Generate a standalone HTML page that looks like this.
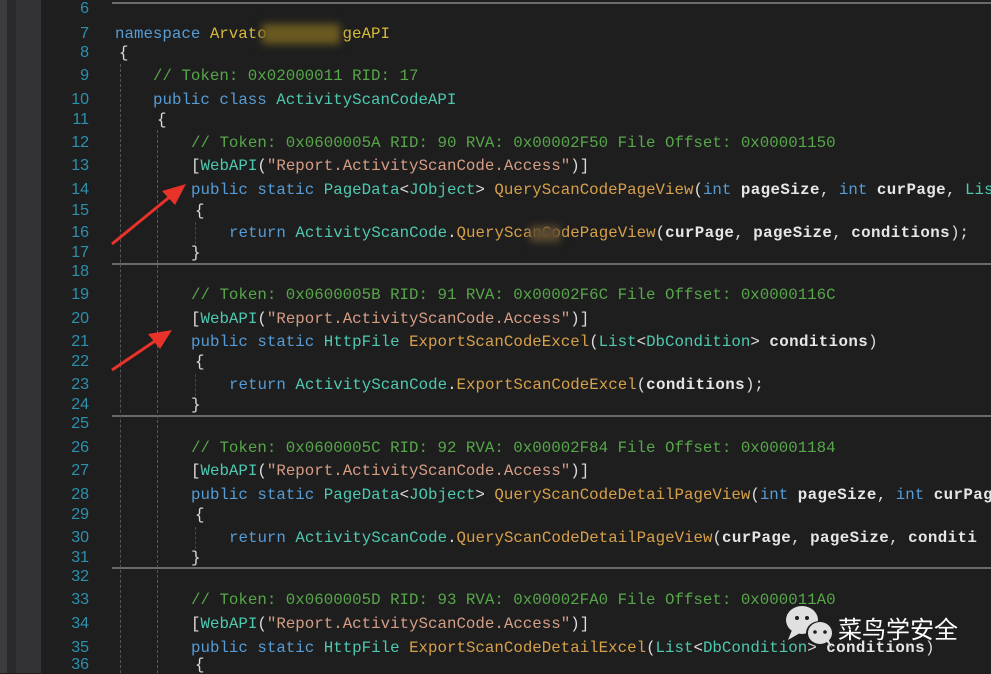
<!DOCTYPE html>
<html><head><meta charset="utf-8"><style>
html,body{margin:0;padding:0;}
body{width:991px;height:673px;background:#1e1e1e;position:relative;overflow:hidden;font-family:"Liberation Mono","Noto Sans CJK SC",monospace;font-size:15.8px;}
.g1{position:absolute;left:0;top:0;width:7px;height:673px;background:#3c3c40}
.g2{position:absolute;left:7px;top:0;width:9px;height:673px;background:#2a2a2d}
.g3{position:absolute;left:16px;top:0;width:25px;height:673px;background:#333336}
.n{position:absolute;left:41px;width:48px;text-align:right;color:#2b91af;line-height:18px;font-family:"Liberation Sans",sans-serif;font-size:16px}
.l{position:absolute;left:115px;white-space:pre;line-height:18px;color:#dcdcdc}
.k{color:#569cd6}.t{color:#4ec9b0}.s{color:#d69d85}.m{color:#d7a04a}.c{color:#57a64a}.y{color:#d7ba3a}.b{font-weight:bold;color:#e6e6e6;letter-spacing:0.4px}.p{color:#b4b4b4}
.sep{position:absolute;left:112px;right:0;height:2px;background:#6a6a6a}
.vg{position:absolute;width:0;border-left:1px dashed}
.blur{position:absolute;filter:blur(4px)}
</style></head><body>
<div class="g1"></div><div class="g2"></div><div class="g3"></div>
<div class="sep" style="top:2px"></div>
<div class="sep" style="top:263px"></div>
<div class="sep" style="top:415px"></div>
<div class="sep" style="top:567px"></div>
<div class="vg" style="left:120px;top:64px;height:609px;border-color:#555"></div>
<div class="vg" style="left:157px;top:130px;height:543px;border-color:#2e6b5e"></div>
<div class="vg" style="left:195px;top:222px;height:22px;border-color:#2e4d6b"></div>
<div class="vg" style="left:195px;top:374px;height:22px;border-color:#2e4d6b"></div>
<div class="vg" style="left:195px;top:527px;height:22px;border-color:#2e4d6b"></div>

<div class="n" style="top:0">6</div>
<div class="n" style="top:25px">7</div>
<div class="n" style="top:44px">8</div>
<div class="n" style="top:67px">9</div>
<div class="n" style="top:91px">10</div>
<div class="n" style="top:111px">11</div>
<div class="n" style="top:134px">12</div>
<div class="n" style="top:157px">13</div>
<div class="n" style="top:181px">14</div>
<div class="n" style="top:202px">15</div>
<div class="n" style="top:224px">16</div>
<div class="n" style="top:244px">17</div>
<div class="n" style="top:263px">18</div>
<div class="n" style="top:286px">19</div>
<div class="n" style="top:310px">20</div>
<div class="n" style="top:333px">21</div>
<div class="n" style="top:353px">22</div>
<div class="n" style="top:376px">23</div>
<div class="n" style="top:396px">24</div>
<div class="n" style="top:415px">25</div>
<div class="n" style="top:439px">26</div>
<div class="n" style="top:462px">27</div>
<div class="n" style="top:486px">28</div>
<div class="n" style="top:506px">29</div>
<div class="n" style="top:529px">30</div>
<div class="n" style="top:549px">31</div>
<div class="n" style="top:568px">32</div>
<div class="n" style="top:591px">33</div>
<div class="n" style="top:615px">34</div>
<div class="n" style="top:639px">35</div>
<div class="n" style="top:656px">36</div>

<div class="l" style="top:25px"><span class="k">namespace</span> <span class="y">Arvato        geAPI</span></div>
<div class="blur" style="left:262px;top:24px;width:78px;height:20px;background:#6a5a20"></div>
<div class="l" style="top:44px;left:119px">{</div>
<div class="l" style="top:67px;left:153px"><span class="c">// Token: 0x02000011 RID: 17</span></div>
<div class="l" style="top:91px;left:153px"><span class="k">public class</span> <span class="t">ActivityScanCodeAPI</span></div>
<div class="l" style="top:111px;left:157px">{</div>

<div class="l" style="top:134px;left:191px"><span class="c">// Token: 0x0600005A RID: 90 RVA: 0x00002F50 File Offset: 0x00001150</span></div>
<div class="l" style="top:157px;left:191px">[<span class="t">WebAPI</span>(<span class="s">"Report.ActivityScanCode.Access"</span>)]</div>
<div class="l" style="top:181px;left:191px"><span class="k">public static</span> <span class="t">PageData</span>&lt;<span class="t">JObject</span>&gt; <span class="m">QueryScanCodePageView</span>(<span class="k">int</span> <span class="b">pageSize</span>, <span class="k">int</span> <span class="b">curPage</span>, <span class="t">List</span></div>
<div class="l" style="top:202px;left:195px">{</div>
<div class="l" style="top:224px;left:229px"><span class="k">return</span> <span class="t">ActivityScanCode</span>.<span class="m">QueryScanCodePageView</span>(<span class="b">curPage</span>, <span class="b">pageSize</span>, <span class="b">conditions</span>);</div>
<div class="blur" style="left:530px;top:226px;width:30px;height:16px;background:#5a4a30"></div>
<div class="l" style="top:244px;left:191px">}</div>

<div class="l" style="top:286px;left:191px"><span class="c">// Token: 0x0600005B RID: 91 RVA: 0x00002F6C File Offset: 0x0000116C</span></div>
<div class="l" style="top:310px;left:191px">[<span class="t">WebAPI</span>(<span class="s">"Report.ActivityScanCode.Access"</span>)]</div>
<div class="l" style="top:333px;left:191px"><span class="k">public static</span> <span class="t">HttpFile</span> <span class="m">ExportScanCodeExcel</span>(<span class="t">List</span>&lt;<span class="t">DbCondition</span>&gt; <span class="b">conditions</span>)</div>
<div class="l" style="top:353px;left:195px">{</div>
<div class="l" style="top:376px;left:229px"><span class="k">return</span> <span class="t">ActivityScanCode</span>.<span class="m">ExportScanCodeExcel</span>(<span class="b">conditions</span>);</div>
<div class="l" style="top:396px;left:191px">}</div>

<div class="l" style="top:439px;left:191px"><span class="c">// Token: 0x0600005C RID: 92 RVA: 0x00002F84 File Offset: 0x00001184</span></div>
<div class="l" style="top:462px;left:191px">[<span class="t">WebAPI</span>(<span class="s">"Report.ActivityScanCode.Access"</span>)]</div>
<div class="l" style="top:486px;left:191px"><span class="k">public static</span> <span class="t">PageData</span>&lt;<span class="t">JObject</span>&gt; <span class="m">QueryScanCodeDetailPageView</span>(<span class="k">int</span> <span class="b">pageSize</span>, <span class="k">int</span> <span class="b">curPage</span></div>
<div class="l" style="top:506px;left:195px">{</div>
<div class="l" style="top:529px;left:229px"><span class="k">return</span> <span class="t">ActivityScanCode</span>.<span class="m">QueryScanCodeDetailPageView</span>(<span class="b">curPage</span>, <span class="b">pageSize</span>, <span class="b">conditi</span></div>
<div class="l" style="top:549px;left:191px">}</div>

<div class="l" style="top:591px;left:191px"><span class="c">// Token: 0x0600005D RID: 93 RVA: 0x00002FA0 File Offset: 0x000011A0</span></div>
<div class="l" style="top:615px;left:191px">[<span class="t">WebAPI</span>(<span class="s">"Report.ActivityScanCode.Access"</span>)]</div>
<div class="l" style="top:639px;left:191px"><span class="k">public static</span> <span class="t">HttpFile</span> <span class="m">ExportScanCodeDetailExcel</span>(<span class="t">List</span>&lt;<span class="t">DbCondition</span>&gt; <span class="b">conditions</span>)</div>
<div class="l" style="top:656px;left:195px">{</div>

<svg style="position:absolute;left:0;top:0" width="991" height="673">
<line x1="112" y1="244" x2="172" y2="195" stroke="#e8322a" stroke-width="3"/>
<polygon points="186,184 162,191 175,205" fill="#e8322a"/>
<line x1="112" y1="370" x2="158" y2="339" stroke="#e8322a" stroke-width="3"/>
<polygon points="172,330 148,334 160,349" fill="#e8322a"/>
<ellipse cx="802" cy="620" rx="16" ry="14" fill="#e0e0e0"/>
<polygon points="792,630 788,640 800,633" fill="#e0e0e0"/>
<ellipse cx="820" cy="633" rx="14" ry="12" fill="#1e1e1e"/>
<ellipse cx="820" cy="633" rx="12" ry="11" fill="#e0e0e0"/>
<polygon points="826,641 832,648 828,638" fill="#e0e0e0"/>
<circle cx="797" cy="618" r="2" fill="#1e1e1e"/><circle cx="807" cy="618" r="2" fill="#1e1e1e"/>
<circle cx="815" cy="632" r="1.8" fill="#1e1e1e"/><circle cx="825" cy="632" r="1.8" fill="#1e1e1e"/>
</svg>
<div style="position:absolute;left:838px;top:613px;color:#fff;font-family:'Noto Sans CJK SC',sans-serif;font-size:24px;line-height:30px">菜鸟学安全</div>
</body></html>
